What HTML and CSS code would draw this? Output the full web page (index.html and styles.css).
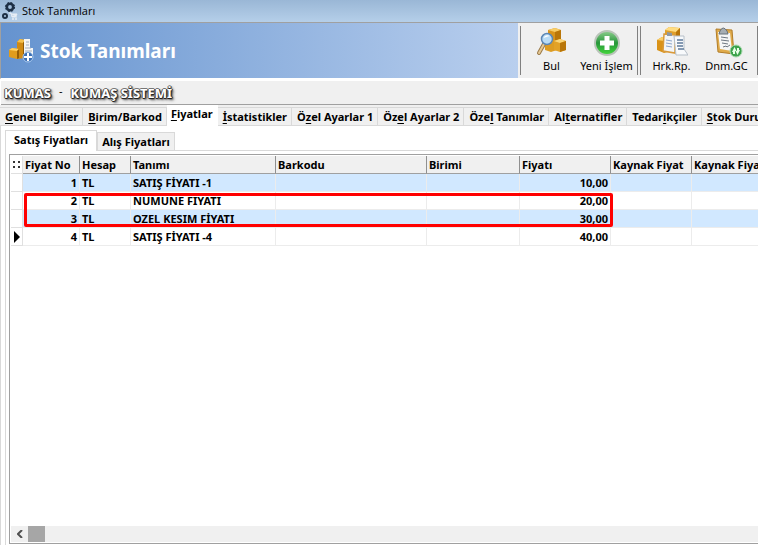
FILE: index.html
```html
<!DOCTYPE html>
<html lang="tr">
<head>
  <meta charset="UTF-8" />
  <meta name="viewport" content="width=device-width, initial-scale=1.0"/>
  <title>Stok Tanımları</title>
  <link rel="stylesheet" href="styles.css">
</head>
<body>
  <div class="titlebar">
    <svg class="app-icon" width="16" height="18" viewBox="0 0 16 18">
      <circle cx="8" cy="5" r="3.2" fill="none" stroke="#1d2f45" stroke-width="2.6"/>
      <circle cx="8" cy="5" r="4.6" fill="none" stroke="#1d2f45" stroke-width="1" stroke-dasharray="2 1.6"/>
      <circle cx="3" cy="14" r="2" fill="none" stroke="#1d2f45" stroke-width="2"/>
      <path d="M7 11h2l1 4h5M9 12h6l-1 2h-4" fill="#e8eef5" stroke="#e8eef5"/>
      <circle cx="11" cy="17" r="1" fill="#e8eef5"/>
      <circle cx="14" cy="17" r="1" fill="#e8eef5"/>
    </svg>
    <span>Stok Tanımları</span>
  </div>

  <header class="header">
    <div class="banner">
      <svg width="25" height="25" viewBox="0 0 25 25">
        <path d="M8 4l3-3 5 1v18l-8 1z" fill="#d08a12"/>
        <path d="M8 4l3-3 5 1-2 3z" fill="#f3c04c"/>
        <path d="M14 5l2-3v18l-2 1z" fill="#8e5a06"/>
        <path d="M0 12l3-2 7 1v9l-2 1-8-2z" fill="#e09c1c"/>
        <path d="M0 12l3-2 7 1-2 2z" fill="#ffd060"/>
        <path d="M8 13l2-2v9l-2 1z" fill="#965e05"/>
        <path d="M15 1h6v9h3v9h-9z" fill="#f5f6f5"/>
        <path d="M17 4h3M17 7h3M16 10h6M16 13h7" stroke="#a4adb9"/>
        <circle cx="19" cy="19" r="5" fill="#3c6fb4" stroke="#a9caef"/>
        <path d="M19 15v8M15 19h8" stroke="#fff" stroke-width="2"/>
      </svg>
      <h1>Stok Tanımları</h1>
    </div>
    <div class="toolbar">
      <div class="tool-group">
        <button class="tool" type="button">
          <svg width="32" height="32" viewBox="0 0 32 32">
            <path d="M12 4l7-2 6 2v9l-6 2-7-2z" fill="#d8941c"/>
            <path d="M12 4l7-2 6 2-6 2z" fill="#f7cd68"/>
            <path d="M19 6l6-2v9l-6 2z" fill="#b97609"/>
            <path d="M9 15l6-2 6 2v9l-6 2-6-2z" fill="#dd9c22"/>
            <path d="M18 15l6-2 6 2v9l-6 2-6-2z" fill="#e2a227"/>
            <path d="M18 15l6-2 6 2-6 2z" fill="#fbd678"/>
            <path d="M24 17l6-2v9l-6 2z" fill="#b97609"/>
            <path d="M8 18l-5 9" stroke="#9b7a48" stroke-width="4" stroke-linecap="round"/>
            <path d="M8 18l-5 9" stroke="#e5c894" stroke-width="2" stroke-linecap="round"/>
            <circle cx="11" cy="13" r="5.5" fill="#b9dcf6" stroke="#5c87b5" stroke-width="1.5"/>
            <path d="M7.5 12a4 4 0 0 1 6-2z" fill="#fff"/>
          </svg>
          <span>Bul</span>
        </button>
        <button class="tool" type="button">
          <svg width="32" height="32" viewBox="0 0 32 32">
            <defs>
              <linearGradient id="plusFill" x1="0" y1="0" x2="0" y2="1">
                <stop offset="0" stop-color="#8fcf8f"/>
                <stop offset=".5" stop-color="#27963a"/>
                <stop offset="1" stop-color="#45da3c"/>
              </linearGradient>
            </defs>
            <circle cx="16" cy="17" r="12" fill="url(#plusFill)" stroke="#b9c4b9" stroke-width="2"/>
            <path d="M16 10v14M9 17h14" stroke="#fff" stroke-width="5"/>
          </svg>
          <span>Yeni İşlem</span>
        </button>
      </div>
      <div class="tool-group">
        <button class="tool" type="button">
          <svg width="32" height="32" viewBox="0 0 32 32">
            <path d="M9 4l4-3 11 1v11H9z" fill="#e0a02a"/>
            <path d="M9 4l4-3 11 1-4 4z" fill="#ffdc82"/>
            <path d="M20 6l4-4v11h-4z" fill="#b97609"/>
            <path d="M1 14l5-3 9 2v12l-7 2-7-3z" fill="#d99218"/>
            <path d="M1 14l5-3 9 2-7 2z" fill="#fbcf68"/>
            <path d="M8 8l11 1v18L7 25z" fill="#f3f5f7" stroke="#d99a3a" stroke-width="1.5"/>
            <path d="M11 6l5 1v3h-5z" fill="#8d98a5"/>
            <path d="M10 14l6 1M10 17l6 1M10 20l6 1" stroke="#8ba5cc"/>
            <path d="M18 10h10v13l4 6H20z" fill="#f8fafc" stroke="#b6bfc8"/>
            <path d="M21 14h6M21 17h6M21 20h6M22 23h6" stroke="#5e7999" stroke-width="1.5"/>
          </svg>
          <span>Hrk.Rp.</span>
        </button>
        <button class="tool" type="button">
          <svg width="32" height="32" viewBox="0 0 32 32">
            <path d="M5 3l16 1 2 24-16-2z" fill="#e0ab4a" stroke="#b27d29"/>
            <path d="M7 6l12 1 2 18-12-2z" fill="#f5f6f6"/>
            <path d="M9 5q3-6 7 0l1 3H8z" fill="#a5adb3" stroke="#69727a"/>
            <path d="M10 11l7 1M10 14l8 1M11 17l6 1M12 21l3-1 1 1 3-2" fill="none" stroke="#6d7681"/>
            <circle cx="25" cy="25" r="6" fill="#3ca34c" stroke="#a7d9ad"/>
            <path d="M21 26l2.500-5 2 4h-1.500v3h-2v-2zM29 24l-2.500 5-2-4h1.500v-3h2v2z" fill="#e9ffe9"/>
          </svg>
          <span>Dnm.GC</span>
        </button>
      </div>
    </div>
  </header>

  <div class="record">
    <span class="record-name">KUMAS</span>
    <span class="record-dash">-</span>
    <span class="record-name">KUMAŞ SİSTEMİ</span>
  </div>

  <nav class="tabs">
    <button type="button"><u>G</u>enel Bilgiler</button>
    <button type="button"><u>B</u>irim/Barkod</button>
    <button type="button" class="active"><u>F</u>iyatlar</button>
    <button type="button"><u>İ</u>statistikler</button>
    <button type="button">Ö<u>z</u>el Ayarlar 1</button>
    <button type="button">Öz<u>e</u>l Ayarlar 2</button>
    <button type="button">Öze<u>l</u> Tanımlar</button>
    <button type="button">Al<u>t</u>ernatifler</button>
    <button type="button">Tedar<u>i</u>kçiler</button>
    <button type="button"><u>S</u>tok Durumu</button>
  </nav>

  <main class="page">
    <nav class="subtabs">
      <button type="button" class="active">Satış Fiyatları</button>
      <button type="button">Alış Fiyatları</button>
    </nav>
    <div class="panel">
      <div class="grid">
        <div class="grid-body">
          <table>
            <colgroup>
              <col class="col-mark"><col class="col-no"><col class="col-account"><col class="col-name"><col class="col-barcode"><col class="col-unit"><col class="col-price"><col class="col-source"><col class="col-source">
            </colgroup>
            <thead>
              <tr>
                <th class="mark">
                  <svg width="8" height="8" viewBox="0 0 8 8"><path d="M0 0h2v2H0zM5 0h2v2H5zM0 5h2v2H0zM5 5h2v2H5z" fill="#333"/></svg>
                </th>
                <th>Fiyat No</th>
                <th>Hesap</th>
                <th>Tanımı</th>
                <th>Barkodu</th>
                <th>Birimi</th>
                <th>Fiyatı</th>
                <th>Kaynak Fiyat</th>
                <th>Kaynak Fiyat</th>
              </tr>
            </thead>
            <tbody>
              <tr><td class="mark"></td><td class="num">1</td><td>TL</td><td>SATIŞ FİYATI -1</td><td></td><td></td><td class="num">10,00</td><td></td><td></td></tr>
              <tr><td class="mark"></td><td class="num">2</td><td>TL</td><td>NUMUNE FIYATI</td><td></td><td></td><td class="num">20,00</td><td></td><td></td></tr>
              <tr><td class="mark"></td><td class="num">3</td><td>TL</td><td>OZEL KESIM FİYATI</td><td></td><td></td><td class="num">30,00</td><td></td><td></td></tr>
              <tr><td class="mark"><svg width="6" height="12" viewBox="0 0 6 12"><path d="M0 0l6 6-6 6z"/></svg></td><td class="num">4</td><td>TL</td><td>SATIŞ FİYATI -4</td><td></td><td></td><td class="num">40,00</td><td></td><td></td></tr>
            </tbody>
          </table>
          <div class="highlight"></div>
        </div>
        <div class="scrollbar">
          <button type="button" aria-label="Sola kaydır">
            <svg width="6" height="8" viewBox="0 0 6 8"><path d="M5 0L1 4l4 4" fill="none" stroke="#505050" stroke-width="2"/></svg>
          </button>
          <div class="thumb"></div>
        </div>
      </div>
    </div>
  </main>
</body>
</html>
```
FILE: styles.css
```css
* {
  box-sizing: border-box;
  margin: 0;
  padding: 0;
}

body {
  display: flex;
  flex-direction: column;
  height: 100vh;
  overflow: hidden;
  background: #ffffff;
  color: #000000;
  font-family: "Noto Sans", sans-serif;
  font-size: 11px;
  line-height: 16px;
}

button {
  border: none;
  background: none;
  color: inherit;
  font: inherit;
  white-space: nowrap;
}

u {
  text-underline-offset: 2px;
}

/* Window title */
.titlebar {
  display: flex;
  align-items: center;
  gap: 4px;
  height: 23px;
  padding-left: 2px;
  background: linear-gradient(#9ab7d6, #b5cfe9);
  border-bottom: 1px solid #a0a0a0;
  font-family: "Open Sans", sans-serif;
}

/* Banner and toolbar */
.header {
  display: flex;
  height: 56px;
  border-left: 1px solid #a0a0a0;
  border-bottom: 1px solid #ffffff;
  background: #f0f0f0;
}

.banner {
  flex: 1;
  display: flex;
  align-items: center;
  gap: 6px;
  padding-left: 8px;
  background: linear-gradient(90deg, #6593cf, #b9cfee);
}

.banner h1 {
  color: #ffffff;
  font-size: 19px;
  line-height: 24px;
}

.toolbar {
  display: flex;
  gap: 2px;
  padding: 3px 0 3px 2px;
}

.tool-group {
  display: flex;
  border-left: 1px solid #808080;
  border-right: 1px solid #808080;
  padding: 0 3px;
}

.tool {
  display: flex;
  flex-direction: column;
  align-items: center;
  width: 55px;
}

/* Current record */
.record {
  display: flex;
  gap: 8px;
  height: 26px;
  margin-left: 1px;
  padding: 4px 3px;
  border-top: 2px solid #ffffff;
  border-bottom: 1px solid #a0a0a0;
  background: #f0f0f0;
}

.record-name {
  color: #ffffff;
  font-size: 13px;
  font-weight: bold;
  text-shadow: 1px 0 #333, -1px 0 #555, 0 1px #222, 0 -1px #777, 1px 1px 2px #000, 2px 2px 3px #555;
}

.record-dash {
  line-height: 12px;
}

/* Main tabs */
.tabs {
  display: flex;
  height: 21px;
  padding-top: 2px;
  background: #f0f0f0;
  font-weight: bold;
}

.tabs button {
  flex: none;
  height: 19px;
  padding: 0 4px 0 5px;
  border: 1px solid #d9d9d9;
  border-left: none;
}

.tabs .active {
  height: 21px;
  margin-top: -2px;
  padding: 0 4px 3px;
  border-color: #ffffff;
  background: #ffffff;
}

/* Price page */
.page {
  flex: 1;
  display: flex;
  flex-direction: column;
  min-height: 0;
  padding: 4px 0 0 4px;
  border-left: 1px solid #d9d9d9;
}

.subtabs {
  display: flex;
  align-items: flex-end;
  font-weight: bold;
}

.subtabs button {
  height: 18px;
  padding: 0 4px;
  border: 1px solid #d9d9d9;
  border-bottom: none;
  background: #f0f0f0;
}

.subtabs .active {
  height: 21px;
  margin-bottom: -1px;
  padding: 0 8px 3px;
  background: #ffffff;
  z-index: 1;
}

.panel {
  flex: 1;
  display: flex;
  min-height: 0;
  padding: 3px 0 1px 3px;
  border-top: 1px solid #d9d9d9;
  border-left: 1px solid #d9d9d9;
}

.grid {
  flex: 1;
  display: flex;
  flex-direction: column;
  min-width: 0;
  padding: 1px 0 1px 1px;
  border: 1px solid #a0a0a0;
  border-right: none;
}

.grid-body {
  flex: 1;
  position: relative;
  overflow: hidden;
}

table {
  width: 762px;
  table-layout: fixed;
  border-collapse: separate;
  border-spacing: 0;
  font-weight: bold;
}

.col-mark { width: 12px; }
.col-no { width: 57px; }
.col-account { width: 51px; }
.col-name { width: 145px; }
.col-barcode { width: 151px; }
.col-unit { width: 93px; }
.col-price { width: 91px; }
.col-source { width: 81px; }

th,
td {
  height: 18px;
  padding: 0 2px;
  border-right: 1px solid #ececec;
  border-bottom: 1px solid #ececec;
  line-height: 16px;
  text-align: left;
  white-space: nowrap;
  overflow: hidden;
}

th {
  background: #f0f0f0;
  border-right: 1px solid #909090;
  border-bottom: 1px solid #a0a0a0;
}

tbody tr:nth-child(odd) td {
  background: #d1e8ff;
}

.num {
  text-align: right;
}

th.mark,
tbody tr td.mark {
  padding: 0 1px;
  border-color: #e0e0e0;
  background: #ffffff;
}

.mark svg {
  display: block;
  margin: auto;
}

.highlight {
  position: absolute;
  top: 37px;
  left: 13px;
  width: 589px;
  height: 34px;
  border: 3px solid #ff0000;
  border-radius: 2px;
}

.scrollbar {
  display: flex;
  height: 16px;
  background: #f0f0f0;
}

.scrollbar button {
  display: flex;
  align-items: center;
  justify-content: center;
  width: 17px;
}

.thumb {
  width: 17px;
  background: #a6a6a6;
}
```
